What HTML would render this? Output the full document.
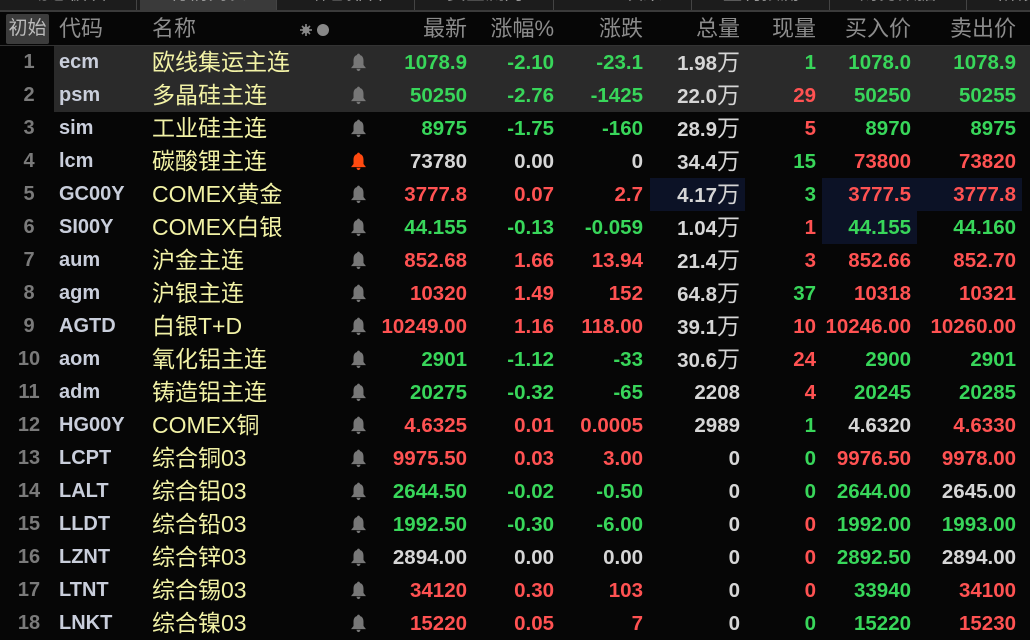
<!DOCTYPE html>
<html><head><meta charset="utf-8"><style>
*{margin:0;padding:0;box-sizing:border-box}
body{width:1030px;height:637px;background:#060606;overflow:hidden;position:relative;font-family:"Liberation Sans","Noto Sans CJK SC",sans-serif}
.tabs{position:absolute;left:0;top:0;width:1030px;height:12px;background:#1c1c1c;border-bottom:2px solid #3a3a3a;overflow:hidden}
.tab{position:absolute;top:0;height:10px;width:137px;border-right:1px solid #444;color:#999;font-size:19px;line-height:10px;text-align:center;overflow:hidden}
.tab span{position:relative;top:-11px}
.tab.on{background:#3a3a3a}
.hdr{position:absolute;top:12px;left:0;width:1030px;height:34px;border-bottom:1px solid #333;color:#8c8c8c;font-size:22px}
.hdr span{position:absolute;top:2px;line-height:30px;white-space:nowrap}
.btn{position:absolute;left:6px;top:14px;width:43px;height:30px;background:#3c3c3c;color:#bbb;font-size:19px;line-height:30px;text-align:center;border-radius:2px}
.row{position:absolute;left:0;width:1030px;height:33px}
.row span{position:absolute;top:0;line-height:33px;white-space:nowrap}
.n{left:8px;width:42px;text-align:center;color:#7a7a7a;font-size:20px;font-weight:bold}
.c{left:59px;color:#c9cedb;font-size:20px;font-weight:bold}
.m{left:152px;color:#f2f2a6;font-size:23px}
.b{position:absolute;left:348px;top:6px}
.v{font-size:20.5px;font-weight:bold}
.v1{right:563px}.v2{right:476px}.v3{right:387px}.v4{right:290px}.v5{right:214px}.v6{right:119px}.v7{right:14px}
.v4 i{font-style:normal;font-weight:normal;font-size:23px}
.G{color:#38d65a}.R{color:#ff5252}.W{color:#d6d6d6}
.hl{position:absolute;background:#0c1226}
</style></head><body>
<div class="tabs">
<div class="tab" style="left:0"><span>动态板块</span></div>
<div class="tab on" style="left:140px"><span>行情列表</span></div>
<div class="tab" style="left:278px"><span>增仓排名</span></div>
<div class="tab" style="left:417px"><span>资金流向</span></div>
<div class="tab" style="left:555px"><span>DDE决策</span></div>
<div class="tab" style="left:693px"><span>盈利预测</span></div>
<div class="tab" style="left:830px"><span>财务数据</span></div>
<div class="tab" style="left:968px"><span>阶段统计</span></div>
</div>
<div class="hdr">
<span style="left:59px">代码</span><span style="left:152px">名称</span>
<svg style="position:absolute;left:299px;top:11px" width="34" height="14" viewBox="0 0 34 14"><g stroke="#888" stroke-width="1.6"><line x1="7" y1="1" x2="7" y2="13"/><line x1="1" y1="7" x2="13" y2="7"/><line x1="3" y1="3" x2="11" y2="11"/><line x1="11" y1="3" x2="3" y2="11"/></g><circle cx="7" cy="7" r="3.5" fill="#888"/><circle cx="24" cy="7" r="6" fill="#888"/></svg>
<span style="right:563px">最新</span><span style="right:476px">涨幅%</span><span style="right:387px">涨跌</span><span style="right:290px">总量</span><span style="right:214px">现量</span><span style="right:119px">买入价</span><span style="right:14px">卖出价</span>
</div>
<div class="btn">初始</div>
<div style="position:absolute;left:54px;top:46px;width:976px;height:66px;background:#2a2a2a"></div>
<div class="hl" style="left:650px;top:178px;width:95px;height:33px"></div>
<div class="hl" style="left:822px;top:178px;width:95px;height:66px"></div>
<div class="hl" style="left:917px;top:178px;width:105px;height:33px"></div>
<svg width="0" height="0" style="position:absolute"><defs><symbol id="bell" viewBox="0 0 16 16"><path d="M8 1.2c.8 0 1.1.6 1.1 1.1 2 .5 2.7 2.3 2.7 4.3v3.3l1.9 2.4H2.3l1.9-2.4V6.6c0-2 .7-3.8 2.7-4.3 0-.5.3-1.1 1.1-1.1zM6.5 12.8h3c0 1-.7 1.8-1.5 1.8S6.5 13.8 6.5 12.8z"/></symbol></defs></svg>

<div class="row" style="top:46px"><span class="n">1</span><span class="c">ecm</span><span class="m">欧线集运主连</span><svg class="b" width="21" height="21" fill="#777"><use href="#bell"/></svg><span class="v v1 G">1078.9</span><span class="v v2 G">-2.10</span><span class="v v3 G">-23.1</span><span class="v v4 W">1.98<i>万</i></span><span class="v v5 G">1</span><span class="v v6 G">1078.0</span><span class="v v7 G">1078.9</span></div>
<div class="row" style="top:79px"><span class="n">2</span><span class="c">psm</span><span class="m">多晶硅主连</span><svg class="b" width="21" height="21" fill="#777"><use href="#bell"/></svg><span class="v v1 G">50250</span><span class="v v2 G">-2.76</span><span class="v v3 G">-1425</span><span class="v v4 W">22.0<i>万</i></span><span class="v v5 R">29</span><span class="v v6 G">50250</span><span class="v v7 G">50255</span></div>
<div class="row" style="top:112px"><span class="n">3</span><span class="c">sim</span><span class="m">工业硅主连</span><svg class="b" width="21" height="21" fill="#777"><use href="#bell"/></svg><span class="v v1 G">8975</span><span class="v v2 G">-1.75</span><span class="v v3 G">-160</span><span class="v v4 W">28.9<i>万</i></span><span class="v v5 R">5</span><span class="v v6 G">8970</span><span class="v v7 G">8975</span></div>
<div class="row" style="top:145px"><span class="n">4</span><span class="c">lcm</span><span class="m">碳酸锂主连</span><svg class="b" width="21" height="21" fill="#ff4a10"><use href="#bell"/></svg><span class="v v1 W">73780</span><span class="v v2 W">0.00</span><span class="v v3 W">0</span><span class="v v4 W">34.4<i>万</i></span><span class="v v5 G">15</span><span class="v v6 R">73800</span><span class="v v7 R">73820</span></div>
<div class="row" style="top:178px"><span class="n">5</span><span class="c">GC00Y</span><span class="m">COMEX黄金</span><svg class="b" width="21" height="21" fill="#777"><use href="#bell"/></svg><span class="v v1 R">3777.8</span><span class="v v2 R">0.07</span><span class="v v3 R">2.7</span><span class="v v4 W">4.17<i>万</i></span><span class="v v5 G">3</span><span class="v v6 R">3777.5</span><span class="v v7 R">3777.8</span></div>
<div class="row" style="top:211px"><span class="n">6</span><span class="c">SI00Y</span><span class="m">COMEX白银</span><svg class="b" width="21" height="21" fill="#777"><use href="#bell"/></svg><span class="v v1 G">44.155</span><span class="v v2 G">-0.13</span><span class="v v3 G">-0.059</span><span class="v v4 W">1.04<i>万</i></span><span class="v v5 R">1</span><span class="v v6 G">44.155</span><span class="v v7 G">44.160</span></div>
<div class="row" style="top:244px"><span class="n">7</span><span class="c">aum</span><span class="m">沪金主连</span><svg class="b" width="21" height="21" fill="#777"><use href="#bell"/></svg><span class="v v1 R">852.68</span><span class="v v2 R">1.66</span><span class="v v3 R">13.94</span><span class="v v4 W">21.4<i>万</i></span><span class="v v5 R">3</span><span class="v v6 R">852.66</span><span class="v v7 R">852.70</span></div>
<div class="row" style="top:277px"><span class="n">8</span><span class="c">agm</span><span class="m">沪银主连</span><svg class="b" width="21" height="21" fill="#777"><use href="#bell"/></svg><span class="v v1 R">10320</span><span class="v v2 R">1.49</span><span class="v v3 R">152</span><span class="v v4 W">64.8<i>万</i></span><span class="v v5 G">37</span><span class="v v6 R">10318</span><span class="v v7 R">10321</span></div>
<div class="row" style="top:310px"><span class="n">9</span><span class="c">AGTD</span><span class="m">白银T+D</span><svg class="b" width="21" height="21" fill="#777"><use href="#bell"/></svg><span class="v v1 R">10249.00</span><span class="v v2 R">1.16</span><span class="v v3 R">118.00</span><span class="v v4 W">39.1<i>万</i></span><span class="v v5 R">10</span><span class="v v6 R">10246.00</span><span class="v v7 R">10260.00</span></div>
<div class="row" style="top:343px"><span class="n">10</span><span class="c">aom</span><span class="m">氧化铝主连</span><svg class="b" width="21" height="21" fill="#777"><use href="#bell"/></svg><span class="v v1 G">2901</span><span class="v v2 G">-1.12</span><span class="v v3 G">-33</span><span class="v v4 W">30.6<i>万</i></span><span class="v v5 R">24</span><span class="v v6 G">2900</span><span class="v v7 G">2901</span></div>
<div class="row" style="top:376px"><span class="n">11</span><span class="c">adm</span><span class="m">铸造铝主连</span><svg class="b" width="21" height="21" fill="#777"><use href="#bell"/></svg><span class="v v1 G">20275</span><span class="v v2 G">-0.32</span><span class="v v3 G">-65</span><span class="v v4 W">2208</span><span class="v v5 R">4</span><span class="v v6 G">20245</span><span class="v v7 G">20285</span></div>
<div class="row" style="top:409px"><span class="n">12</span><span class="c">HG00Y</span><span class="m">COMEX铜</span><svg class="b" width="21" height="21" fill="#777"><use href="#bell"/></svg><span class="v v1 R">4.6325</span><span class="v v2 R">0.01</span><span class="v v3 R">0.0005</span><span class="v v4 W">2989</span><span class="v v5 G">1</span><span class="v v6 W">4.6320</span><span class="v v7 R">4.6330</span></div>
<div class="row" style="top:442px"><span class="n">13</span><span class="c">LCPT</span><span class="m">综合铜03</span><svg class="b" width="21" height="21" fill="#777"><use href="#bell"/></svg><span class="v v1 R">9975.50</span><span class="v v2 R">0.03</span><span class="v v3 R">3.00</span><span class="v v4 W">0</span><span class="v v5 G">0</span><span class="v v6 R">9976.50</span><span class="v v7 R">9978.00</span></div>
<div class="row" style="top:475px"><span class="n">14</span><span class="c">LALT</span><span class="m">综合铝03</span><svg class="b" width="21" height="21" fill="#777"><use href="#bell"/></svg><span class="v v1 G">2644.50</span><span class="v v2 G">-0.02</span><span class="v v3 G">-0.50</span><span class="v v4 W">0</span><span class="v v5 G">0</span><span class="v v6 G">2644.00</span><span class="v v7 W">2645.00</span></div>
<div class="row" style="top:508px"><span class="n">15</span><span class="c">LLDT</span><span class="m">综合铅03</span><svg class="b" width="21" height="21" fill="#777"><use href="#bell"/></svg><span class="v v1 G">1992.50</span><span class="v v2 G">-0.30</span><span class="v v3 G">-6.00</span><span class="v v4 W">0</span><span class="v v5 R">0</span><span class="v v6 G">1992.00</span><span class="v v7 G">1993.00</span></div>
<div class="row" style="top:541px"><span class="n">16</span><span class="c">LZNT</span><span class="m">综合锌03</span><svg class="b" width="21" height="21" fill="#777"><use href="#bell"/></svg><span class="v v1 W">2894.00</span><span class="v v2 W">0.00</span><span class="v v3 W">0.00</span><span class="v v4 W">0</span><span class="v v5 R">0</span><span class="v v6 G">2892.50</span><span class="v v7 W">2894.00</span></div>
<div class="row" style="top:574px"><span class="n">17</span><span class="c">LTNT</span><span class="m">综合锡03</span><svg class="b" width="21" height="21" fill="#777"><use href="#bell"/></svg><span class="v v1 R">34120</span><span class="v v2 R">0.30</span><span class="v v3 R">103</span><span class="v v4 W">0</span><span class="v v5 R">0</span><span class="v v6 G">33940</span><span class="v v7 R">34100</span></div>
<div class="row" style="top:607px"><span class="n">18</span><span class="c">LNKT</span><span class="m">综合镍03</span><svg class="b" width="21" height="21" fill="#777"><use href="#bell"/></svg><span class="v v1 R">15220</span><span class="v v2 R">0.05</span><span class="v v3 R">7</span><span class="v v4 W">0</span><span class="v v5 G">0</span><span class="v v6 G">15220</span><span class="v v7 R">15230</span></div>
</body></html>
